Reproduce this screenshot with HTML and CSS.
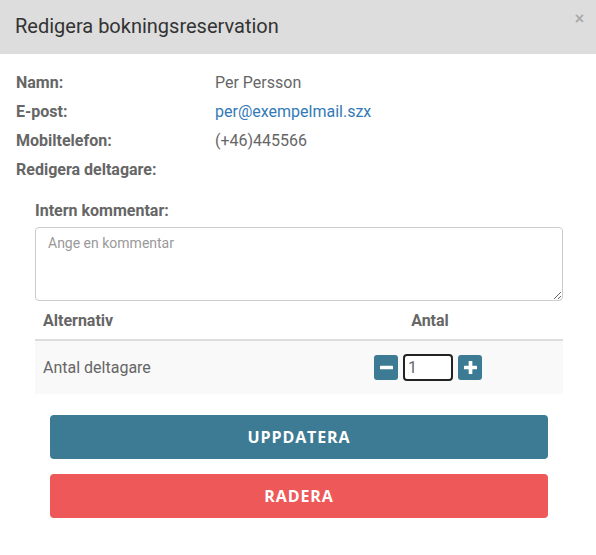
FILE: index.html
```html
<!DOCTYPE html>
<html lang="sv">
<head>
<meta charset="utf-8">
<title>Redigera bokningsreservation</title>
<link rel="stylesheet" href="styles.css">
</head>
<body>
<div class="modal">
  <div class="modal-header">
    <h4 class="modal-title">Redigera bokningsreservation</h4>
    <span class="close">×</span>
  </div>
  <div class="modal-body">
    <dl class="info">
      <dt>Namn:</dt><dd>Per Persson</dd>
      <dt>E-post:</dt><dd><a href="#">per@exempelmail.szx</a></dd>
      <dt>Mobiltelefon:</dt><dd>(+46)445566</dd>
      <dt>Redigera deltagare:</dt><dd></dd>
    </dl>
    <div class="section">
      <label class="comment-label">Intern kommentar:</label>
      <textarea class="comment" placeholder="Ange en kommentar"></textarea>
      <table class="options">
        <thead>
          <tr><th class="col-alt">Alternativ</th><th class="col-qty">Antal</th></tr>
        </thead>
        <tbody>
          <tr>
            <td class="col-alt">Antal deltagare</td>
            <td class="col-qty">
              <div class="stepper">
                <button class="step" aria-label="minus"><svg width="13" height="13" viewBox="0 0 12 12"><rect x="0" y="4.3" width="12" height="3.4" rx="0.5" fill="#fff"/></svg></button>
                <input class="qty" type="text" value="1">
                <button class="step" aria-label="plus"><svg width="13" height="13" viewBox="0 0 12 12"><rect x="0" y="4.3" width="12" height="3.4" rx="0.5" fill="#fff"/><rect x="4.3" y="0" width="3.4" height="12" rx="0.5" fill="#fff"/></svg></button>
              </div>
            </td>
          </tr>
        </tbody>
      </table>
      <div class="actions">
        <button class="btn btn-primary">UPPDATERA</button>
        <button class="btn btn-danger">RADERA</button>
      </div>
    </div>
  </div>
</div>
</body>
</html>
```
FILE: styles.css
```css
html, body {
  margin: 0;
  padding: 0;
  background: #fff;
}
body {
  font-family: Roboto, "Liberation Sans", sans-serif;
  color: #666;
  width: 596px;
}
.modal {
  display: flex;
  flex-direction: column;
}
.modal-header {
  background: #dddddd;
  height: 54px;
  display: flex;
  align-items: flex-start;
  justify-content: space-between;
  padding: 0 12px 0 15px;
  box-sizing: border-box;
}
.modal-title {
  margin: 14px 0 0;
  font-size: 20px;
  font-weight: 400;
  color: #333;
  line-height: 24px;
}
.close {
  font-size: 16px;
  line-height: 16px;
  margin-top: 11px;
  color: #aaa;
  font-weight: 700;
  font-family: "Liberation Sans", sans-serif;
}
.modal-body {
  padding: 18px 0 0 16px;
}
.info {
  display: grid;
  grid-template-columns: 199px 1fr;
  row-gap: 7px;
  margin: 0;
  font-size: 16px;
  line-height: 22px;
}
.info dt {
  font-weight: 700;
  color: #666;
  font-size: 16px;
}
.info dd {
  margin: 0;
  color: #666;
}
.info a {
  color: #337ab7;
  text-decoration: none;
}
.section {
  padding: 19px 33px 0 19px;
  display: flex;
  flex-direction: column;
}
.comment-label {
  font-weight: 700;
  font-size: 16px;
  line-height: 22px;
  color: #666;
}
.comment {
  margin-top: 5px;
  height: 74px;
  box-sizing: border-box;
  border: 1px solid #ccc;
  border-radius: 4px;
  padding: 7px 12px;
  font-family: Roboto, "Liberation Sans", sans-serif;
  font-size: 14px;
  color: #555;
  resize: vertical;
}
.comment::placeholder {
  color: #999;
}
.options {
  width: 100%;
  border-collapse: collapse;
  margin-top: 1px;
  font-size: 16px;
}
.options th {
  font-weight: 700;
  font-size: 16px;
  color: #666;
  height: 37px;
  padding: 0 8px;
  border-bottom: 2px solid #ddd;
  vertical-align: middle;
}
.options th.col-alt { text-align: left; }
.options td {
  background: #f9f9f9;
  height: 53px;
  padding: 0 8px;
  vertical-align: middle;
  color: #666;
}
.col-alt { width: 246px; }
.col-qty { text-align: center; }
.stepper {
  display: flex;
  align-items: center;
  justify-content: center;
  gap: 5px;
  padding-right: 4px;
}
.step {
  width: 24px;
  height: 25px;
  border: none;
  border-radius: 3px;
  background: #3d7b94;
  padding: 0;
  display: flex;
  align-items: center;
  justify-content: center;
}
.qty {
  width: 50px;
  height: 27px;
  box-sizing: border-box;
  border: 2px solid #222;
  border-radius: 4px;
  padding: 0 3px;
  font-family: Roboto, "Liberation Sans", sans-serif;
  font-size: 16px;
  color: #666;
  background: #fff;
}
.actions {
  display: flex;
  flex-direction: column;
  gap: 15px;
  margin-top: 21px;
  padding: 0 15px;
}
.btn {
  height: 44px;
  border: none;
  border-radius: 4px;
  color: #fff;
  font-family: "Open Sans", sans-serif;
  font-weight: 700;
  font-size: 16px;
  letter-spacing: 0.9px;
}
.btn-primary { background: #3d7b94; }
.btn-danger { background: #ee5858; }
```
